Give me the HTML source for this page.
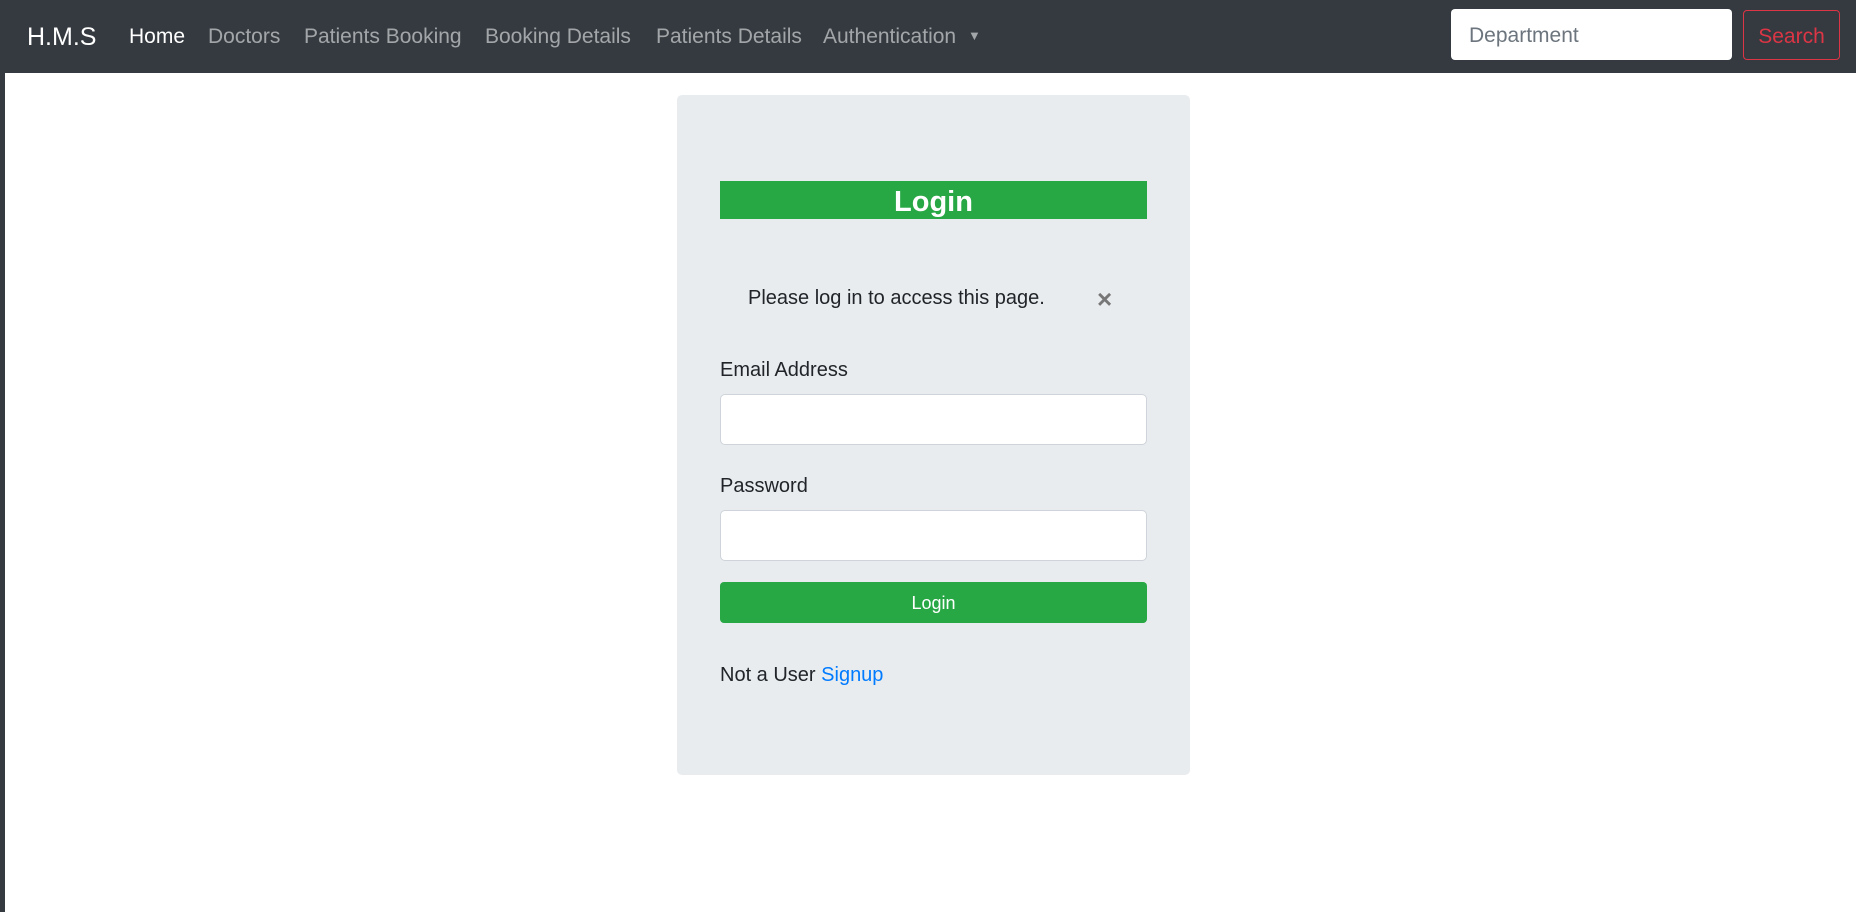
<!DOCTYPE html>
<html><head><meta charset="utf-8"><style>
*{box-sizing:border-box;margin:0;padding:0}
body{width:1856px;height:912px;background:#fff;font-family:"Liberation Sans",sans-serif;position:relative;overflow:hidden}
.strip{position:absolute;left:0;top:0;width:5px;height:912px;background:#343a40}
.nav{position:absolute;left:0;top:0;width:1856px;height:73px;background:#343a40}
.nav span{position:absolute;top:25px;font-size:21px;color:rgba(255,255,255,.55);white-space:nowrap}
.brand{font-size:25px!important;color:#fff!important;top:23px!important}
.inp{position:absolute;left:1451px;top:9px;width:281px;height:51px;background:#fff;border-radius:4px;font-size:21px;color:#6c757d;padding:15px 0 0 18px}
.btn{position:absolute;left:1743px;top:10px;width:97px;height:50px;border:1px solid #dc3545;border-radius:4px;color:#dc3545;font-size:21px;text-align:center;padding-top:14px}
.card{position:absolute;left:677px;top:95px;width:513px;height:680px;background:#e9ecef;border-radius:5px}
.hdr{position:absolute;left:43px;top:86px;width:427px;height:38px;background:#28a745;color:#fff;font-weight:bold;font-size:29px;text-align:center;line-height:42px}
.t{position:absolute;font-size:20px;color:#212529;white-space:nowrap}
.field{position:absolute;left:43px;width:427px;height:51px;background:#fff;border:1px solid #ced4da;border-radius:5px}
.lb{position:absolute;left:43px;top:487px;width:427px;height:41px;background:#28a745;border-radius:4px;color:#fff;font-size:18px;text-align:center;line-height:43px}
</style></head><body>
<div class="strip"></div>
<div class="nav">
<span class="brand" style="left:27px">H.M.S</span>
<span style="left:129px;color:#fff">Home</span>
<span style="left:208px">Doctors</span>
<span style="left:304px">Patients Booking</span>
<span style="left:485px">Booking Details</span>
<span style="left:656px">Patients Details</span>
<span style="left:823px">Authentication <span style="position:static;font-size:13px;vertical-align:3px;margin-left:6px">▼</span></span>
<div class="inp">Department</div>
<div class="btn">Search</div>
</div>
<div class="card">
<div class="t" style="left:71px;top:192px">Please log in to access this page.</div>
<div class="hdr">Login</div>
<div class="t" style="left:420px;top:189px;font-size:26px;color:#777;font-weight:bold">×</div>
<div class="t" style="left:43px;top:264px">Email Address</div>
<div class="field" style="top:299px"></div>
<div class="t" style="left:43px;top:380px">Password</div>
<div class="field" style="top:415px"></div>
<div class="lb">Login</div>
<div class="t" style="left:43px;top:569px">Not a User <span style="color:#007bff">Signup</span></div>
</div>
</body></html>
